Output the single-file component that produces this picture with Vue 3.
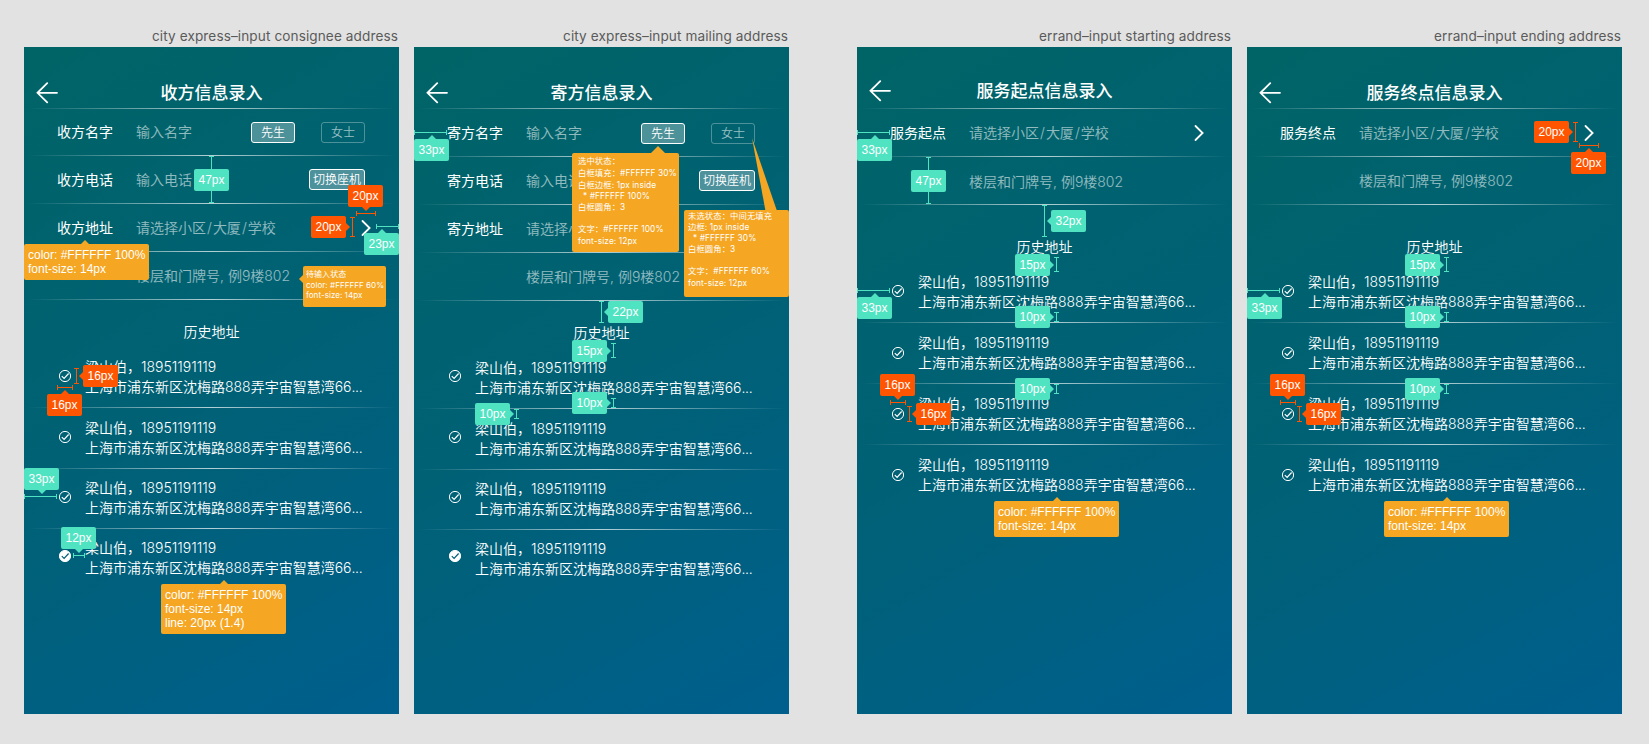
<script setup>
const history = (gaps, nudges, filledLast) =>
  gaps.map((top, i) => ({
    top,
    nudge: nudges[i],
    filled: filledLast && i === gaps.length - 1,
    last: i === gaps.length - 1,
  }))

const tag = (text, color, x, y, arrow = 'none') => ({ text, color, x, y, arrow })
const rule = (dir, color, x, y, len) => ({
  color,
  path: dir === 'v'
    ? `M${x} ${y + 0.5}h5M${x} ${y + len - 0.5}h5M${x + 2.5} ${y}v${len}`
    : `M${x + 0.5} ${y}v5M${x + len - 0.5} ${y}v5M${x} ${y + 2.5}h${len}`,
})
const palette = { teal: '#50e3c2', red: '#ff5500' }

const expressRows = (who, firstHeight, firstPad) => [
  { label: who + '方名字', hint: '输入名字', control: 'gender', h: firstHeight, pad: firstPad },
  { label: who + '方电话', hint: '输入电话', control: 'phone', h: 47, pad: 0 },
  { label: who + '方地址', hint: '请选择小区/大厦/学校', control: who === '收' ? 'more' : '', h: 47, pad: 0 },
  { label: '', hint: '楼层和门牌号, 例9楼802', control: '', h: 47, pad: 1 },
]
const errandRows = (what, pad, pad2) => [
  { label: '服务' + what, hint: '请选择小区/大厦/学校', control: 'more', h: 47, pad },
  { label: '', hint: '楼层和门牌号, 例9楼802', control: '', h: 47, pad: pad2 },
]

const errandTags = [
  tag('15px', 'teal', 158, 207, 'right'),
  tag('10px', 'teal', 158, 259, 'right'),
  tag('10px', 'teal', 158, 331, 'right'),
  tag('33px', 'teal', 0, 250, 'top'),
  tag('16px', 'red', 23, 327, 'bottom'),
  tag('16px', 'red', 59, 356, 'left'),
]
const errandRules = [
  rule('v', 'teal', 197, 210, 15),
  rule('v', 'teal', 197, 265, 10),
  rule('v', 'teal', 197, 337, 10),
  rule('h', 'teal', 0, 241, 33),
  rule('h', 'red', 33, 353, 16),
  rule('v', 'red', 50, 359, 16),
]
const errandNotes = [
  { x: 137, y: 454, w: 125, h: 36, arrowX: 63, lines: ['color: #FFFFFF 100%', 'font-size: 14px'] },
]

const boards = [
  {
    id: 'consignee',
    caption: 'city express–input consignee address',
    title: '收方信息录入',
    headPad: 31,
    rows: expressRows('收', 46, 0),
    historyGap: 22,
    items: history([0, 10, 9, 9], [-1, -1, -1, -2], true),
    tags: [
      tag('47px', 'teal', 170, 122),
      tag('20px', 'red', 324, 138, 'bottom'),
      tag('20px', 'red', 287, 169, 'right'),
      tag('23px', 'teal', 340, 186, 'top'),
      tag('16px', 'red', 59, 318, 'left'),
      tag('16px', 'red', 23, 347, 'top'),
      tag('33px', 'teal', 0, 421, 'bottom'),
      tag('12px', 'teal', 37, 480, 'bottom'),
    ],
    rules: [
      rule('v', 'teal', 185, 109, 47),
      rule('h', 'red', 332, 164, 20),
      rule('v', 'red', 326, 170, 20),
      rule('h', 'teal', 352, 177, 23),
      rule('v', 'red', 50, 321, 16),
      rule('h', 'red', 33, 338, 16),
      rule('h', 'teal', 0, 447, 33),
      rule('h', 'teal', 49, 506, 12),
    ],
    notes: [
      { x: 0, y: 197, w: 125, h: 36, arrowX: 61, lines: ['color: #FFFFFF 100%', 'font-size: 14px'] },
      { x: 137, y: 537, w: 125, h: 50, arrowX: 63, lines: ['color: #FFFFFF 100%', 'font-size: 14px', 'line: 20px (1.4)'] },
    ],
    smallNotes: [
      {
        kind: 'pending', x: 279, y: 219, w: 83, h: 41,
        lines: [['待输入状态', 14], ['color: #FFFFFF 60%', 9], ['font-size: 14px', 11]],
      },
    ],
  },
  {
    id: 'mailing',
    caption: 'city express–input mailing address',
    title: '寄方信息录入',
    headPad: 31,
    rows: expressRows('寄', 47, 1),
    historyGap: 22,
    items: history([0, 10, 9, 9], [-2, -2, -2, -3], true),
    tags: [
      tag('33px', 'teal', 0, 92, 'top'),
      tag('22px', 'teal', 194, 254, 'left'),
      tag('15px', 'teal', 158, 293, 'right'),
      tag('10px', 'teal', 158, 345, 'right'),
      tag('10px', 'teal', 61, 356, 'right'),
    ],
    rules: [
      rule('h', 'teal', 0, 83, 33),
      rule('v', 'teal', 185, 254, 22),
      rule('v', 'teal', 197, 296, 15),
      rule('v', 'teal', 197, 351, 10),
      rule('v', 'teal', 100, 362, 10),
    ],
    notes: [],
    smallNotes: [
      {
        kind: 'selected', x: 158, y: 106, w: 107, h: 99,
        lines: [['选中状态：', 12], ['白框填充：#FFFFFF 30%', 12], ['白框边框: 1px inside', 12], ['  * #FFFFFF 100%', 10], ['白框圆角：3', 12], ['', 10], ['文字：#FFFFFF 100%', 12], ['font-size: 12px', 12]],
      },
      {
        kind: 'idle', x: 270, y: 163, w: 105, h: 87,
        lines: [['未选状态：中间无填充', 12], ['边框: 1px inside', 11], ['  * #FFFFFF 30%', 11], ['白框圆角：3', 11], ['', 10], ['文字：#FFFFFF 60%', 12], ['font-size: 12px', 12]],
      },
    ],
  },
  {
    id: 'start',
    caption: 'errand–input starting address',
    title: '服务起点信息录入',
    headPad: 27,
    rows: errandRows('起点', 1, 3),
    historyGap: 32,
    items: history([0, 10, 10, 10], [-1, 0, 0, 0], false),
    tags: [
      tag('33px', 'teal', 0, 92, 'top'),
      tag('47px', 'teal', 54, 123),
      tag('32px', 'teal', 194, 163, 'left'),
      ...errandTags,
    ],
    rules: [
      rule('h', 'teal', 0, 83, 33),
      rule('v', 'teal', 69, 110, 47),
      rule('v', 'teal', 185, 158, 32),
      ...errandRules,
    ],
    notes: errandNotes,
    smallNotes: [],
  },
  {
    id: 'end',
    caption: 'errand–input ending address',
    title: '服务终点信息录入',
    headPad: 31,
    rows: errandRows('终点', 1, 1),
    historyGap: 32,
    items: history([0, 10, 10, 10], [-1, 0, 0, 0], false),
    tags: [
      tag('20px', 'red', 287, 74, 'right'),
      tag('20px', 'red', 324, 105, 'top'),
      ...errandTags,
    ],
    rules: [
      rule('v', 'red', 326, 75, 20),
      rule('h', 'red', 332, 96, 20),
      ...errandRules,
    ],
    notes: errandNotes,
    smallNotes: [],
  },
]
</script>

<template>
  <main class="canvas">
    <section v-for="b in boards" :key="b.id" class="board" :class="'board-' + b.id">
      <h2 class="caption">{{ b.caption }}</h2>
      <div class="phone">
        <header class="head" :style="{ paddingTop: b.headPad + 'px' }">
          <svg class="back" width="22" height="22" viewBox="0 0 22 22">
            <path d="M11.2 1.2L1.5 10.8L11.2 20.4M1.5 10.8H21" />
          </svg>
          <h1 class="title">{{ b.title }}</h1>
        </header>
        <i class="line"></i>
        <template v-for="(r, i) in b.rows" :key="i">
          <div class="row" :style="{ height: r.h + 'px', paddingTop: r.pad + 'px' }">
            <span class="label">{{ r.label }}</span>
            <span class="hint"><template v-for="(part, k) in r.hint.split('/')" :key="k"><span v-if="k" class="slash">/</span>{{ part }}</template></span>
            <span v-if="r.control === 'gender'" class="choices gender">
              <button class="chip on">先生</button>
              <button class="chip">女士</button>
            </span>
            <span v-if="r.control === 'phone'" class="choices">
              <button class="chip on wide">切换座机</button>
            </span>
            <svg v-if="r.control === 'more'" class="more" width="20" height="20" viewBox="0 0 20 20">
              <path d="M6.5 3L13.6 10L6.5 17" />
            </svg>
          </div>
          <i class="line"></i>
        </template>

        <h3 class="history-title" :style="{ marginTop: b.historyGap + 'px' }">历史地址</h3>
        <ul class="history">
          <li v-for="(it, i) in b.items" :key="i">
            <div class="item" :style="{ paddingTop: it.top + 'px' }">
              <svg class="check" :class="{ filled: it.filled }" :style="{ marginTop: 13 + it.nudge + 'px' }" width="14" height="14" viewBox="0 0 14 14">
                <circle cx="7" cy="7" r="5.6" />
                <path d="M3.8 7.2L6.1 9.5L10.6 4.5" />
              </svg>
              <div class="who">
                <p>梁山伯，18951191119</p>
                <p>上海市浦东新区沈梅路888弄宇宙智慧湾66<span class="dots">...</span></p>
              </div>
            </div>
            <i v-if="!it.last" class="line"></i>
          </li>
        </ul>

        <div class="overlay">
          <svg class="rules" width="375" height="667">
            <path v-for="(r, i) in b.rules" :key="i" :d="r.path" :stroke="palette[r.color]" />
          </svg>
          <span
            v-for="(t, i) in b.tags" :key="i" class="tag" :class="[t.color, 'arrow-' + t.arrow]"
            :style="{ left: t.x + 'px', top: t.y + 'px' }"
          >{{ t.text }}</span>
          <div
            v-for="(n, i) in b.notes" :key="'n' + i" class="note"
            :style="{ left: n.x + 'px', top: n.y + 'px', width: n.w + 'px', height: n.h + 'px', '--arrow-x': n.arrowX + 'px' }"
          >
            <p v-for="l in n.lines" :key="l">{{ l }}</p>
          </div>
          <div
            v-for="n in b.smallNotes" :key="n.kind" class="small-note" :class="n.kind"
            :style="{ left: n.x + 'px', top: n.y + 'px', width: n.w + 'px', height: n.h + 'px' }"
          >
            <p v-for="(l, j) in n.lines" :key="j" :style="{ height: l[1] + 'px', lineHeight: l[1] + 'px' }">{{ l[0] }}</p>
          </div>
          <svg v-if="b.id === 'mailing'" class="rules" width="375" height="667">
            <path class="pointer" d="M338 91L351.5 164H363Z" />
          </svg>
        </div>
      </div>
    </section>
  </main>
</template>

<style>
html, body { margin: 0; background: #e2e2e2; }
</style>

<style scoped>
* { box-sizing: border-box; margin: 0; padding: 0; }
.canvas {
  display: flex;
  gap: 15px;
  width: 1649px;
  height: 744px;
  padding: 25px 0 0 24px;
  background: #e2e2e2;
  overflow: hidden;
  font-family: Inter, "Noto Sans CJK SC", sans-serif;
}
.board { width: 375px; flex: none; }
.board-start { margin-left: 53px; }
.caption {
  height: 22px;
  padding-right: 1px;
  line-height: 22px;
  font-size: 13.6px;
  font-weight: 400;
  letter-spacing: 0.1px;
  color: #5a5a5a;
  text-align: right;
  white-space: nowrap;
}
.phone {
  position: relative;
  height: 667px;
  background: linear-gradient(150deg, #006466 0%, #006175 50%, #005f8d 100%);
  color: #fff;
}
.head {
  display: grid;
  grid-template-columns: 50px 1fr 50px;
  align-items: center;
  height: 61px;
}
.back { margin-left: 12px; }
.back path, .more path { fill: none; stroke: #fff; stroke-width: 1.8; stroke-linecap: round; }
.title { font-size: 17px; line-height: 24px; font-weight: 500; text-align: center; }
.line {
  display: block;
  height: 1px;
  background: linear-gradient(90deg, transparent 1%, rgba(255, 255, 255, .7) 50%, transparent 99%);
}
.row { display: flex; align-items: center; padding: 0 23px 0 33px; font-size: 14px; line-height: 20px; }
.label { width: 79px; flex: none; }
.hint { font-weight: 350; opacity: .57; white-space: nowrap; }
.slash { padding: 0 1px; }
.choices { display: flex; gap: 26px; margin: 0 11px 0 auto; }
.gender { padding-top: 1px; }
.chip {
  width: 44px;
  height: 21px;
  border: 1px solid rgba(255, 255, 255, .3);
  border-radius: 3px;
  background: none;
  color: rgba(255, 255, 255, .6);
  font: 350 12px/19px Inter, "Noto Sans CJK SC", sans-serif;
  white-space: nowrap;
}
.chip.on { border-color: #fff; background: rgba(255, 255, 255, .3); color: #fff; }
.chip.wide { width: 56px; }
.more { margin-left: auto; }
.history-title { font-size: 14px; line-height: 20px; font-weight: 350; text-align: center; margin-bottom: 15px; }
.history { list-style: none; font-size: 14px; line-height: 20px; font-weight: 350; }
.item { display: flex; padding-left: 34px; }
li:not(:last-child) .item { padding-bottom: 10px; }
.check { flex: none; margin-right: 13px; fill: none; stroke: #fff; stroke-width: 1; }
.check path { stroke-width: 1.2; }
.check.filled circle { fill: #fff; }
.check.filled path { stroke: #005f7c; }
.who { white-space: nowrap; }
.dots { letter-spacing: -0.4px; }
.overlay { position: absolute; inset: 0; font: 12px/14px "Liberation Sans", Arial, sans-serif; }
.rules { position: absolute; inset: 0; fill: none; }
.pointer { fill: #f5a623; }
.tag {
  position: absolute;
  width: 35px;
  height: 22px;
  border-radius: 2px;
  line-height: 22px;
  text-align: center;
}
.teal { background: #50e3c2; --tone: #50e3c2; }
.red { background: #ff5500; --tone: #ff5500; }
.tag::after, .note::after, .small-note::after { content: ""; position: absolute; border: 4px solid transparent; }
.tag.arrow-none::after { display: none; }
.tag.arrow-top::after { left: 13.5px; top: -8px; border-bottom-color: var(--tone); }
.tag.arrow-bottom::after { left: 13.5px; bottom: -8px; border-top-color: var(--tone); }
.tag.arrow-left::after { left: -8px; top: 7px; border-right-color: var(--tone); }
.tag.arrow-right::after { right: -8px; top: 7px; border-left-color: var(--tone); }
.note, .small-note { position: absolute; background: #f5a623; border-radius: 2px; }
.note { padding: 4px; white-space: nowrap; }
.note::after { left: calc(var(--arrow-x) - 4px); top: -8px; border-bottom-color: #f5a623; }
.small-note { font: 400 8.3px/11px Inter, "Noto Sans CJK SC", sans-serif; letter-spacing: .12px; white-space: pre; }
.pending { padding: 1px 3px; font-size: 8px; letter-spacing: .05px; }
.pending::after { left: -8px; top: 9px; border-right-color: #f5a623; }
.selected { padding: 2px 6px; }
.selected::after { border-width: 7px; left: 79px; top: -14px; border-bottom-color: #f5a623; }
.idle { padding: 0 4px; }
.small-note.idle::after { display: none; }
</style>
